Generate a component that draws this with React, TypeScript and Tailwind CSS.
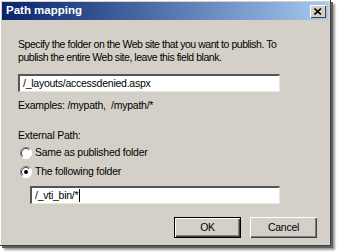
import React from 'react';

function Radio({ checked }: { checked?: boolean }) {
  return (
    <span className="relative inline-block w-[12px] h-[12px] shrink-0">
      <svg width="12" height="12" viewBox="0 0 12 12" className="absolute inset-0">
        <circle cx="6" cy="6" r="5.5" fill="#ffffff" />
        <path d="M10 2 A5.5 5.5 0 0 0 2 10" fill="none" stroke="#808080" strokeWidth="1" />
        <path d="M9.2 2.8 A4.5 4.5 0 0 0 2.8 9.2" fill="none" stroke="#404040" strokeWidth="1" />
        <path d="M2 10 A5.5 5.5 0 0 0 10 2" fill="none" stroke="#ffffff" strokeWidth="1" />
        {checked && <circle cx="6" cy="6" r="2" fill="#000000" />}
      </svg>
    </span>
  );
}

function TextBox({ value, caret }: { value: string; caret?: boolean }) {
  return (
    <div className="h-[18px] bg-white border-t-2 border-l-2 border-t-[#555] border-l-[#555] border-b border-r border-b-[#e8e6e0] border-r-[#e8e6e0] flex items-center pl-[3px]">
      <span className="leading-none">{value}</span>
      {caret && <span className="w-px h-[13px] bg-black ml-[1px]" />}
    </div>
  );
}

function Button({ label, isDefault }: { label: string; isDefault?: boolean }) {
  return (
    <div
      className={
        'w-[67px] h-[21px] flex items-center justify-center text-black bg-[#d4d0c8] ' +
        (isDefault
          ? 'border border-black shadow-[inset_1px_1px_0_#fff,inset_-1px_-1px_0_#404040,inset_-2px_-2px_0_#808080]'
          : 'shadow-[inset_1px_1px_0_#fff,inset_-1px_-1px_0_#404040,inset_-2px_-2px_0_#808080]')
      }
    >
      {label}
    </div>
  );
}

export default function App() {
  return (
    <div
      className="w-[337px] h-[252px] bg-white text-[10.5px] tracking-[-0.25px] text-black"
      style={{ fontFamily: '"Liberation Sans", Arial, sans-serif' }}
    >
      <div className="w-[331px] h-[246px] bg-[#d4d0c8] p-[2px] border-r border-b border-[#404040] shadow-[inset_1px_1px_0_#fff,2px_2px_0_#606060,4px_4px_2px_#9a9a9a]">
        {/* Title bar */}
        <div className="h-[18px] flex items-center justify-between pl-[4px] pr-[2px] bg-gradient-to-r from-[#0a246a] to-[#a6caf0]">
          <span className="text-white font-bold text-[11.5px] tracking-normal leading-none">Path mapping</span>
          <div className="w-[16px] h-[13px] bg-[#d4d0c8] flex items-center justify-center shadow-[inset_1px_1px_0_#fff,inset_-1px_-1px_0_#404040]">
            <svg width="8" height="7" viewBox="0 0 8 7">
              <path d="M0.5 0.5 L7 6.5 M7 0.5 L0.5 6.5" stroke="#000" strokeWidth="1.6" />
            </svg>
          </div>
        </div>

        <div className="pl-[16px] pr-[48px] pt-[18px]">
          <p className="leading-[13px] whitespace-nowrap tracking-[-0.45px]">
            Specify the folder on the Web site that you want to publish. To
            <br />
            publish the entire Web site, leave this field blank.
          </p>
          <div className="mt-[10px]">
            <TextBox value="/_layouts/accessdenied.aspx" />
          </div>
          <p className="mt-[7px] leading-[13px]">Examples: /mypath,&nbsp; /mypath/*</p>

          <p className="mt-[17px] leading-[13px]">External Path:</p>
          <div className="mt-[4px] flex flex-col gap-[6px] pl-[2px]">
            <label className="flex items-center gap-[3px] leading-[13px]">
              <Radio />
              <span>Same as published folder</span>
            </label>
            <label className="flex items-center gap-[3px] leading-[13px]">
              <Radio checked />
              <span>The following folder</span>
            </label>
          </div>
          <div className="mt-[8px] ml-[12px]">
            <TextBox value="/_vti_bin/*" caret />
          </div>
        </div>

        <div className="flex justify-end gap-[9px] pr-[11px] mt-[13px]">
          <Button label="OK" isDefault />
          <Button label="Cancel" />
        </div>
      </div>
    </div>
  );
}
